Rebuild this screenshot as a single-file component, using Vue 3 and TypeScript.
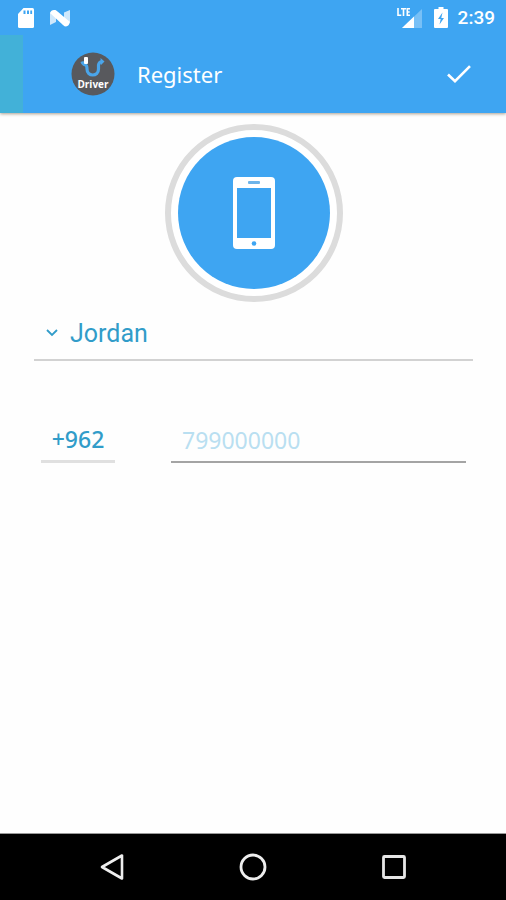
<script setup lang="ts">
import { computed, ref } from 'vue'

interface Country {
  name: string
  dial: string
  example: string
}

const countries: Country[] = [{ name: 'Jordan', dial: '+962', example: '799000000' }]

const selected = ref<string>('Jordan')
const phone = ref<string>('')
const country = computed<Country>(
  () => countries.find((c) => c.name === selected.value) ?? countries[0],
)
</script>

<template>
  <div class="screen">
    <header class="top">
      <div class="status">
        <svg class="sd" viewBox="0 0 16 20" aria-hidden="true">
          <path fill="#fff" d="M5.500 0H14.500Q16 0 16 1.500V18.500Q16 20 14.500 20H1.500Q0 20 0 18.500V6Z" />
          <path fill="#3ea5f2" d="M5.500 2.500h2v3.500h-2zM9 2.500h2v3.500H9zM12.300 2.500h1.800v3.500h-1.800z" />
        </svg>
        <svg class="nougat" viewBox="0 0 20 18" aria-hidden="true">
          <path fill="#fff" opacity=".75" d="M0 4 6 1V13L0 16ZM14 3.500 20 1V13L14 16Z" />
          <path fill="#fff" d="M0 4Q1 1 4 1Q6 0.500 7.500 2.500L20 13Q19 17 16 17.500Q14.500 17.500 13 16Z" />
        </svg>
        <span class="spacer"></span>
        <svg class="signal" viewBox="0 0 26 22" aria-hidden="true">
          <path fill="#fff" opacity=".3" d="M25 2V21H5Z" />
          <path fill="#fff" d="M17 9.600V21H5Z" />
          <path fill="none" stroke="#fff" stroke-width="1.600" d="M1 1V8.200H4.300M4 1.700H9M6.500 1.700V9M13 1.700H10.300V8.200H13M10.300 5H12.700" />
        </svg>
        <svg class="battery" viewBox="0 0 14 21" aria-hidden="true">
          <path fill="#fff" d="M4.500 0h5v2H13q1 0 1 1v17q0 1-1 1H1q-1 0-1-1V3q0-1 1-1h3.500Z" />
          <path fill="#3ea5f2" d="M8.500 5.500 4 12H6.700L5.500 17.500L10 11H7.300Z" />
        </svg>
        <time class="clock">2:39</time>
      </div>
      <div class="appbar">
        <span class="drawer-edge"></span>
        <svg class="logo" viewBox="0 0 44 44" role="img" aria-label="Driver">
          <circle cx="22" cy="22" r="21.500" fill="#58595d" />
          <path fill="none" stroke="#4aa5ea" stroke-width="3.200" stroke-linejoin="round" d="M11 9.500Q12 12.500 14.500 13Q16 13.500 16 17C16 25 27.500 25 27.500 17V13Q28 10 31 9.500" />
          <path fill="#4aa5ea" d="M29.500 6 33.500 9.500 30 13Z" />
          <rect x="13" y="5" width="4" height="7" rx="1" fill="#fff" />
          <text x="22" y="36" text-anchor="middle" class="logo-text">Driver</text>
        </svg>
        <h1 class="title">Register</h1>
        <button class="confirm" type="submit" form="register" aria-label="Confirm">
          <svg viewBox="0 0 24 18" aria-hidden="true">
            <path fill="none" stroke="#fff" stroke-width="2.600" d="M1 9.500 8 16.200 23 1.200" />
          </svg>
        </button>
      </div>
    </header>

    <main class="content">
      <div class="badge">
        <div class="disc">
          <svg viewBox="0 0 44 74" aria-hidden="true">
            <rect x="1" y="1" width="42" height="72" rx="4" fill="#fff" />
            <path fill="#3ea5f2" d="M5 12H39V62H5Z" />
            <rect x="16" y="5" width="12" height="3" rx="1" fill="#6db4ea" />
            <circle cx="22" cy="67.500" r="2.300" fill="#3ea5f2" />
          </svg>
        </div>
      </div>
      <form id="register" class="form" @submit.prevent>
        <div class="country">
          <svg viewBox="0 0 12 8" aria-hidden="true">
            <path fill="none" stroke="#319cc9" stroke-width="1.800" d="M1 1 6 6 11 1" />
          </svg>
          <select v-model="selected" aria-label="Country">
            <option v-for="c in countries" :key="c.name" :value="c.name">{{ c.name }}</option>
          </select>
        </div>
        <div class="numbers">
          <input class="code" type="text" :value="country.dial" readonly aria-label="Country code" />
          <input v-model="phone" class="phone" type="tel" :placeholder="country.example" aria-label="Phone number" />
        </div>
      </form>
    </main>

    <nav class="navbar" aria-label="System">
      <button type="button" aria-label="Back">
        <svg viewBox="0 0 28 28" aria-hidden="true">
          <path fill="none" stroke="#eee" stroke-width="2.600" stroke-linejoin="round" d="M24 2.500V25.500L4 14Z" />
        </svg>
      </button>
      <button type="button" aria-label="Home">
        <svg viewBox="0 0 28 28" aria-hidden="true">
          <circle cx="14" cy="14" r="12" fill="none" stroke="#eee" stroke-width="2.800" />
        </svg>
      </button>
      <button type="button" aria-label="Recent apps">
        <svg viewBox="0 0 28 28" aria-hidden="true">
          <rect x="3.500" y="3.500" width="21" height="21" rx="1" fill="none" stroke="#e6e6e6" stroke-width="2.800" />
        </svg>
      </button>
    </nav>
  </div>
</template>

<style>
body {
  margin: 0;
  background: #fff;
}
</style>

<style scoped>
.screen {
  display: flex;
  flex-direction: column;
  min-height: 100vh;
  background: #fefefe;
  font-family: "Noto Sans", "Open Sans", sans-serif;
}
svg {
  display: block;
}
button {
  padding: 0;
  border: 0;
  background: none;
  cursor: pointer;
}
.top {
  background: #3ea5f2;
  color: #fff;
  box-shadow: 0 1px 3px rgba(90, 70, 40, 0.5);
}
.status {
  display: flex;
  align-items: center;
  height: 35px;
  padding: 0 11px 0 18px;
}
.sd {
  width: 16px;
  height: 20px;
}
.nougat {
  width: 20px;
  height: 18px;
  margin-left: 16px;
}
.spacer {
  flex: 1;
}
.signal {
  width: 26px;
  height: 22px;
  margin-right: 11px;
}
.battery {
  width: 14px;
  height: 21px;
  margin-right: 10px;
}
.clock {
  font: 500 19px/35px Roboto, sans-serif;
}
.appbar {
  display: flex;
  align-items: center;
  height: 78px;
  padding-right: 35px;
}
.drawer-edge {
  align-self: stretch;
  width: 23px;
  background: #42b1d8;
}
.logo {
  width: 44px;
  height: 44px;
  margin-left: 48px;
}
.logo-text {
  fill: #fff;
  font: 700 10px "Open Sans", sans-serif;
}
.title {
  flex: 1;
  margin: 0 0 0 22px;
  font-size: 22px;
  font-weight: 400;
  line-height: 32px;
}
.confirm svg {
  width: 24px;
  height: 18px;
}
.content {
  flex: 1;
  padding: 11px 33px 0 34px;
}
.badge {
  box-sizing: border-box;
  width: 178px;
  height: 178px;
  margin: 0 auto;
  padding: 7px;
  border: 6px solid #dcdcdc;
  border-radius: 50%;
  background: #fff;
}
.disc {
  display: flex;
  align-items: center;
  justify-content: center;
  height: 100%;
  border-radius: 50%;
  background: #3ea5f2;
}
.disc svg {
  width: 44px;
  height: 74px;
}
.country {
  box-sizing: border-box;
  display: flex;
  align-items: center;
  height: 59px;
  padding: 5px 0 0 12px;
  border-bottom: 2px solid #d2d2d2;
}
.country svg {
  width: 12px;
  height: 8px;
}
.country select {
  flex: 1;
  margin-left: 12px;
  padding: 2px 0 0;
  border: 0;
  appearance: none;
  background: none;
  color: #319cc9;
  font: 400 25px/32px Roboto, sans-serif;
}
.numbers {
  display: flex;
  gap: 56px;
  padding: 59px 7px 0;
}
.numbers input {
  box-sizing: border-box;
  height: 43px;
  min-width: 0;
  padding: 0 0 2px;
  border: 0;
  border-radius: 0;
  background: none;
  color: #319cc9;
  font: 400 23px/32px "Noto Sans", sans-serif;
  outline: none;
}
.numbers .code {
  width: 74px;
  border-bottom: 3px solid #e0e0e0;
  font-weight: 500;
  text-align: center;
}
.numbers .phone {
  flex: 1;
  padding-left: 11px;
  border-bottom: 2px solid #a4a4a4;
}
.phone::placeholder {
  color: #b9dff1;
  opacity: 1;
}
.navbar {
  display: flex;
  align-items: center;
  justify-content: center;
  gap: 113px;
  height: 66px;
  border-top: 1px solid #999;
  background: #000;
}
.navbar svg {
  width: 28px;
  height: 28px;
}
</style>
